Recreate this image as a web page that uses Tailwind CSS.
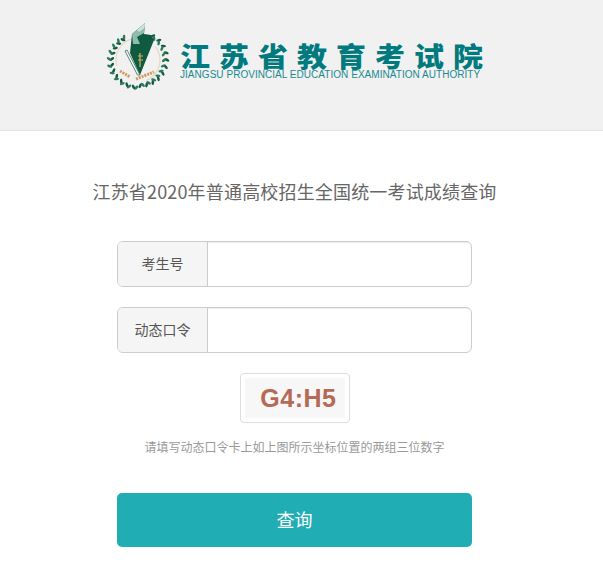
<!DOCTYPE html>
<html lang="zh-CN">
<head>
  <meta charset="UTF-8">
  <title>江苏省2020年普通高校招生全国统一考试成绩查询</title>
  <script src="https://cdn.jsdelivr.net/npm/@tailwindcss/browser@4"></script>
</head>
<body class="bg-white font-['Noto_Sans_CJK_SC',sans-serif] overflow-hidden">
  <header class="h-[131px] bg-[#f1f1f1] border-b border-[#e3e3e3] pt-[20px] pl-[106px]">
    <div class="flex items-start">
      <svg id="logo" width="66" height="72" viewBox="0 0 66 72" class="shrink-0">
        <g id="wreath"></g>
        <circle cx="32" cy="40" r="22" fill="none" stroke="#ecd3b8" stroke-width="1" stroke-dasharray="36 24 40 200" transform="rotate(165 32 40)"/>
        <path d="M26 14 L39 3 L38 14 L45 15 L48 20 L34 55 L24 33 Z" fill="#0f5a41"/>
        <path d="M26 14 L39 3 L38 13 L31 17 L34 24 L27 24 Z" fill="#8fbcae"/>
        <path d="M31 10 L39 3 L38.500 8 L33 12 Z" fill="#cfe0da"/>
        <path d="M21 30 L34 55 L31.500 55 L19 31 Z" fill="#f7f7f7" stroke="#0f5a41" stroke-width="0.7"/>
        <path d="M34 33 v14 M32 36 h5 M32 40 h5" stroke="#d9b25b" stroke-width="1.200" fill="none"/>
        <path d="M14 51 L24 57 M30 59 L48 52" stroke="#cf9a5f" stroke-width="3" stroke-dasharray="2 1" fill="none"/>
      </svg>
      <div class="ml-[8px] pt-[22px]">
        <div class="h-[26px] leading-[26px] text-[30px] font-black tracking-[9px] whitespace-nowrap text-[#007a7e] origin-center scale-y-90">江苏省教育考试院</div>
        <div class="mt-[1px] text-[10px] leading-[12px] tracking-[0.04px] whitespace-nowrap font-['Liberation_Sans',sans-serif] text-[#1b8a90]">JIANGSU PROVINCIAL EDUCATION EXAMINATION AUTHORITY</div>
      </div>
    </div>
  </header>

  <main class="pr-[14px]">
    <h1 class="mt-[46px] h-[28px] leading-[28px] text-center text-[18px] tracking-[0.17px] font-normal text-[#666]">江苏省2020年普通高校招生全国统一考试成绩查询</h1>

    <form class="w-[355px] mx-auto mt-[36px]" onsubmit="return false">
      <div class="flex h-[46px] border border-[#ccc] rounded-[6px] overflow-hidden">
        <label class="w-[90px] shrink-0 flex items-center justify-center pb-[1px] bg-[#f5f5f5] border-r border-[#ccc] text-[14px] text-[#555]">考生号</label>
        <input type="text" class="flex-1 min-w-0 px-3 outline-none shadow-[inset_0_1px_1px_rgba(0,0,0,0.075)]">
      </div>
      <div class="flex h-[46px] mt-[20px] border border-[#ccc] rounded-[6px] overflow-hidden">
        <label class="w-[90px] shrink-0 flex items-center justify-center pb-[1px] bg-[#f5f5f5] border-r border-[#ccc] text-[14px] text-[#555]">动态口令</label>
        <input type="text" class="flex-1 min-w-0 px-3 outline-none shadow-[inset_0_1px_1px_rgba(0,0,0,0.075)]">
      </div>

      <div class="w-[110px] h-[50px] mx-auto mt-[20px] p-[4px] border border-[#ddd] rounded-[4px]">
        <div class="h-full bg-[#f7f7f7] flex items-center justify-end pr-[8px] font-['Liberation_Sans',sans-serif] font-bold text-[25px] leading-none tracking-[0.5px] text-[#b56a55]">G4:H5</div>
      </div>
      <p class="mt-[14px] h-[20px] leading-[20px] text-center text-[12px] text-[#999] whitespace-nowrap">请填写动态口令卡上如上图所示坐标位置的两组三位数字</p>

      <button class="block w-full h-[54px] mt-[36px] pb-[1px] rounded-[5px] bg-[#20aeb4] text-white text-[18px]">查询</button>
    </form>
  </main>

  <script>
    // wreath leaves round the emblem, open at the top
    const wreath = document.getElementById('wreath');
    let leaves = '';
    for (let a = 32; a <= 328; a += 14) {
      const rad = a * Math.PI / 180;
      const x = 32 + 27.5 * Math.sin(rad), y = 40 - 26.5 * Math.cos(rad);
      const side = a < 180 ? 1 : -1;
      leaves += `<ellipse cx="${x - 1.7 * Math.cos(rad)}" cy="${y - 1.7 * Math.sin(rad)}" rx="1.3" ry="2.6" fill="#0f5a41" transform="rotate(${a + 35 * side} ${x} ${y})"/>`;
      leaves += `<ellipse cx="${x + 1.7 * Math.cos(rad)}" cy="${y + 1.7 * Math.sin(rad)}" rx="1.3" ry="2.6" fill="#2d7a5a" transform="rotate(${a - 35 * side} ${x} ${y})"/>`;
    }
    wreath.innerHTML = leaves;
  </script>
</body>
</html>
